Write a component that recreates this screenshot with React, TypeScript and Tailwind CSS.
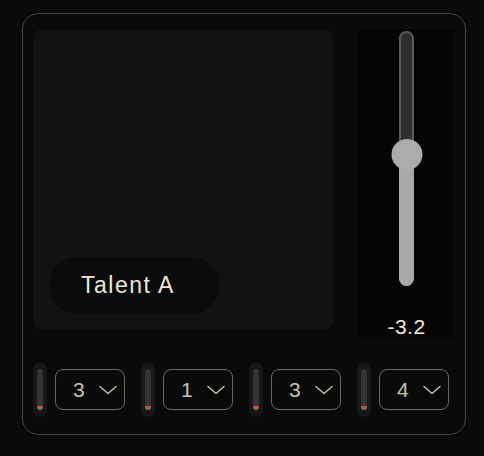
const channels = [3, 1, 3, 4];

function Meter() {
  return (
    <div className="flex h-[55px] w-[14px] items-center justify-center rounded-full bg-[#17171a]">
      <div className="flex h-[41px] w-[6px] flex-col justify-end overflow-hidden rounded-full bg-[#343434]">
        <div className="h-[2px] w-full bg-[#b3583f]" />
        <div className="h-[2px] w-full bg-[#6f7a55]" />
      </div>
    </div>
  );
}

function ChannelSelect({ value }: { value: number }) {
  return (
    <div className="flex h-[41px] w-[70px] items-center rounded-lg border-[1.5px] border-[#6e675d] pl-[17px] pr-[7px]">
      <span className="text-[21px] leading-none text-[#c8c0b1]">{value}</span>
      <svg
        className="ml-auto"
        width="18"
        height="10"
        viewBox="0 0 18 10"
        fill="none"
        stroke="#c8c0b1"
        strokeWidth="1.5"
        strokeLinecap="round"
        strokeLinejoin="round"
      >
        <path d="M1 1.5l8 7 8-7" />
      </svg>
    </div>
  );
}

export default function App() {
  return (
    <div
      className="min-h-[456px] w-[484px] bg-[#0a0a0a] pl-[22px] pt-[13px]"
      style={{ fontFamily: '"Liberation Sans", Arial, sans-serif' }}
    >
      <div className="flex h-[422px] w-[444px] flex-col rounded-2xl border border-[#4a443b] bg-[#0a0a0a] px-[10px] pt-4">
        <div className="flex items-start gap-[25px]">
          <div className="flex h-[299px] w-[300px] flex-col justify-end rounded-lg bg-[#121212] pb-[15px] pl-4">
            <div className="flex h-[57px] w-[170px] items-center rounded-full bg-[#0b0b0b] pl-8">
              <span className="text-[23px] leading-none tracking-[1.5px] text-[#efe6d3]">Talent A</span>
            </div>
          </div>
          <div className="flex h-[309px] w-[97px] flex-col items-center bg-[#050505] pt-[1px]">
            <div className="relative h-[255px] w-[15px] rounded-full border-2 border-[#5c5c5c] bg-[#2e2e2e]">
              <div className="absolute bottom-[-2px] left-[-2px] h-[134px] w-[15px] rounded-b-full bg-[#a9a9a9]" />
              <div className="absolute left-1/2 top-[106px] h-[31px] w-[31px] -translate-x-1/2 rounded-full bg-[#acacac]" />
            </div>
            <span className="mt-[29px] text-[21px] leading-6 tracking-[0.5px] text-[#f3ebdc]">-3.2</span>
          </div>
        </div>
        <div className="mt-[23px] flex items-center gap-4">
          {channels.map((c, i) => (
            <div key={i} className="flex items-center gap-2">
              <Meter />
              <ChannelSelect value={c} />
            </div>
          ))}
        </div>
      </div>
    </div>
  );
}
